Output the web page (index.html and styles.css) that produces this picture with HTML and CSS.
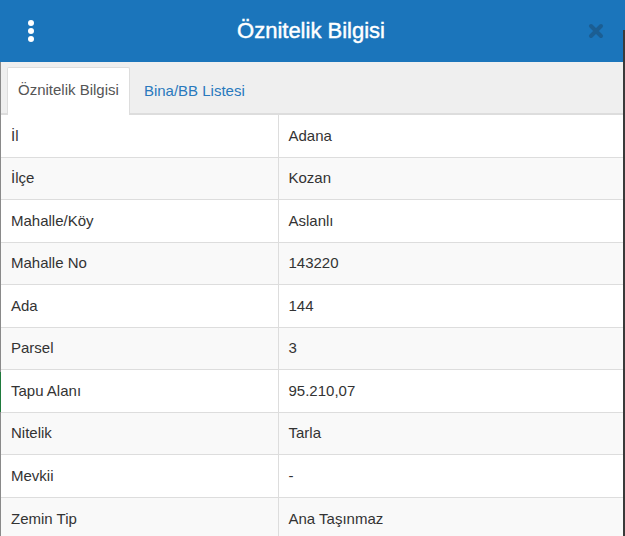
FILE: index.html
```html
<!DOCTYPE html>
<html lang="tr">
<head>
<meta charset="utf-8">
<title>Öznitelik Bilgisi</title>
<link rel="stylesheet" href="styles.css">
</head>
<body>
<div class="frame">
  <div class="edge-left"></div>
  <div class="modal">
    <header class="modal-header">
      <button class="menu-btn" aria-label="Menü">
        <svg width="8" height="22" viewBox="0 0 8 22"><circle cx="4" cy="3" r="3"/><circle cx="4" cy="11" r="3"/><circle cx="4" cy="19" r="3"/></svg>
      </button>
      <h1 class="modal-title">Öznitelik Bilgisi</h1>
      <button class="close-btn" aria-label="Kapat">
        <svg width="16" height="16" viewBox="0 0 16 16"><path d="M3 3 L13 13 M13 3 L3 13" stroke="currentColor" stroke-width="4" stroke-linecap="round"/></svg>
      </button>
    </header>
    <nav class="tabs">
      <a class="tab active">Öznitelik Bilgisi</a>
      <a class="tab">Bina/BB Listesi</a>
    </nav>
    <table class="attr-table">
      <tbody>
        <tr><td class="key">İl</td><td>Adana</td></tr>
        <tr><td class="key">İlçe</td><td>Kozan</td></tr>
        <tr><td class="key">Mahalle/Köy</td><td>Aslanlı</td></tr>
        <tr><td class="key">Mahalle No</td><td>143220</td></tr>
        <tr><td class="key">Ada</td><td>144</td></tr>
        <tr><td class="key">Parsel</td><td>3</td></tr>
        <tr><td class="key">Tapu Alanı</td><td>95.210,07</td></tr>
        <tr><td class="key">Nitelik</td><td>Tarla</td></tr>
        <tr><td class="key">Mevkii</td><td>-</td></tr>
        <tr><td class="key">Zemin Tip</td><td>Ana Taşınmaz</td></tr>
      </tbody>
    </table>
  </div>
  <div class="edge-right"></div>
</div>
</body>
</html>
```

FILE: styles.css
```css
html, body {
  margin: 0;
  padding: 0;
  height: 100%;
  overflow: hidden;
  background: #ffffff;
}
body {
  font-family: "Liberation Sans", Arial, sans-serif;
  color: #333333;
}
.frame {
  display: flex;
  height: 536px;
  width: 625px;
}
.edge-left {
  width: 1px;
  flex: none;
  background: linear-gradient(to bottom, #1b75bb 0, #1b75bb 62px, #8a8a8a 62px, #8a8a8a 372px, #1f7a3c 372px, #1f7a3c 412px, #8a8a8a 412px);
}
.edge-right {
  width: 2px;
  flex: none;
  background: linear-gradient(to bottom, #1b75bb 0, #1b75bb 30px, #3a3a3a 30px);
}
.modal {
  flex: 1;
  display: flex;
  flex-direction: column;
  min-width: 0;
  background: #fff;
}
.modal-header {
  height: 62px;
  flex: none;
  background: #1b75bb;
  display: flex;
  align-items: center;
  padding: 0 17px 0 23px;
}
.menu-btn, .close-btn {
  background: none;
  border: none;
  padding: 0;
  display: flex;
  align-items: center;
  justify-content: center;
  cursor: pointer;
}
.menu-btn {
  width: 14px;
}
.menu-btn svg { fill: #ffffff; }
.modal-title {
  flex: 1;
  margin: 0;
  text-align: center;
  color: #ffffff;
  font-size: 22px;
  font-weight: 400;
  -webkit-text-stroke: 0.45px #ffffff;
  padding-right: 2px;
}
.close-btn {
  width: 20px;
  color: #1b5e93;
}
.tabs {
  flex: none;
  background: #efefef;
  height: 53px;
  box-sizing: border-box;
  border-bottom: 2px solid #dddddd;
  display: flex;
  align-items: flex-end;
  padding-left: 6px;
}
.tab {
  display: block;
  font-size: 15px;
  line-height: 20px;
  padding: 12px 10px 14px;
  margin-bottom: -2px;
  color: #2979bd;
  border: 1px solid transparent;
  border-bottom: none;
  cursor: pointer;
}
.tab.active {
  background: #ffffff;
  color: #555555;
  border-color: #dddddd;
  border-radius: 2px 2px 0 0;
  padding-bottom: 15px;
  margin-right: 3px;
}
.attr-table {
  width: 100%;
  border-collapse: collapse;
  font-size: 15px;
}
.attr-table td {
  height: 42.5px;
  box-sizing: border-box;
  padding: 0 10px;
  line-height: 20px;
  border-top: 1px solid #dddddd;
  vertical-align: middle;
}
.attr-table tr:first-child td { border-top: none; height: 42px; }
.attr-table td.key {
  width: 277px;
  border-right: 1px solid #dddddd;
}
.attr-table tr:nth-child(even) td { background: #f9f9f9; }
```
